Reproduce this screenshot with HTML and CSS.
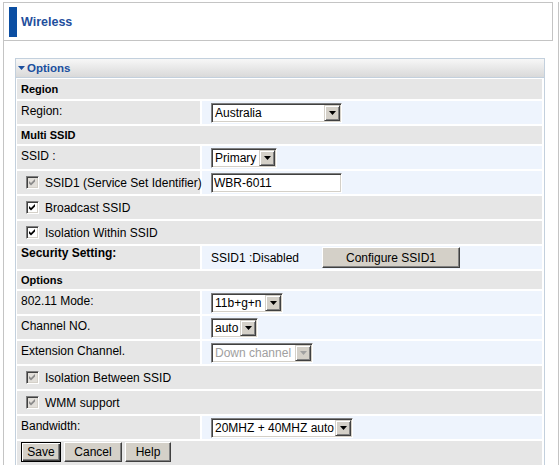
FILE: index.html
```html
<!DOCTYPE html>
<html>
<head>
<meta charset="utf-8">
<title>Wireless</title>
<link rel="stylesheet" href="styles.css">
</head>
<body>
<div class="page">
  <div class="titlebox"><span class="bar"></span><span class="title">Wireless</span></div>
  <div class="content">
    <div class="panel">
      <div class="panel-head"><svg class="tri" width="7" height="4" viewBox="0 0 7 4"><polygon points="0,0 7,0 3.5,4" fill="#1a4f9e"/></svg><span>Options</span></div>
      <div class="panel-body">
        <div class="sec sec-first">Region</div>
        <div class="row">
          <div class="lab">Region:</div>
          <div class="val"><div class="sel w-au"><span class="sel-text">Australia</span><span class="sel-btn"><svg width="7" height="4" viewBox="0 0 7 4"><polygon points="0,0 7,0 3.5,4" fill="#000"/></svg></span></div></div>
        </div>
        <div class="sec">Multi SSID</div>
        <div class="row">
          <div class="lab">SSID :</div>
          <div class="val"><div class="sel w-pr"><span class="sel-text">Primary</span><span class="sel-btn"><svg width="7" height="4" viewBox="0 0 7 4"><polygon points="0,0 7,0 3.5,4" fill="#000"/></svg></span></div></div>
        </div>
        <div class="row">
          <div class="lab lab-chk"><span class="cb cb-dis"><svg width="7" height="7" viewBox="0 0 7 7"><polygon points="0,2 2,4 6,0 6,2.6 2,6.6 0,4.6" fill="#8a8a8a"/></svg></span>SSID1 (Service Set Identifier)</div>
          <div class="val val-in"><input class="txt" type="text" value="WBR-6011"></div>
        </div>
        <div class="full"><span class="cb"><svg width="7" height="7" viewBox="0 0 7 7"><polygon points="0,2 2,4 6,0 6,2.6 2,6.6 0,4.6" fill="#000"/></svg></span>Broadcast SSID</div>
        <div class="full"><span class="cb"><svg width="7" height="7" viewBox="0 0 7 7"><polygon points="0,2 2,4 6,0 6,2.6 2,6.6 0,4.6" fill="#000"/></svg></span>Isolation Within SSID</div>
        <div class="row">
          <div class="lab lab-bold">Security Setting:</div>
          <div class="val val-mid"><span class="sec-state">SSID1 :Disabled</span><button class="btn btn-conf" type="button">Configure SSID1</button></div>
        </div>
        <div class="sec">Options</div>
        <div class="row">
          <div class="lab">802.11 Mode:</div>
          <div class="val"><div class="sel w-md"><span class="sel-text">11b+g+n</span><span class="sel-btn"><svg width="7" height="4" viewBox="0 0 7 4"><polygon points="0,0 7,0 3.5,4" fill="#000"/></svg></span></div></div>
        </div>
        <div class="row">
          <div class="lab">Channel NO.</div>
          <div class="val"><div class="sel w-ch"><span class="sel-text">auto</span><span class="sel-btn"><svg width="7" height="4" viewBox="0 0 7 4"><polygon points="0,0 7,0 3.5,4" fill="#000"/></svg></span></div></div>
        </div>
        <div class="row">
          <div class="lab">Extension Channel.</div>
          <div class="val"><div class="sel sel-dis w-ex"><span class="sel-text">Down channel</span><span class="sel-btn"><svg width="7" height="4" viewBox="0 0 7 4"><polygon points="0,0 7,0 3.5,4" fill="#a0a0a0"/></svg></span></div></div>
        </div>
        <div class="full"><span class="cb cb-dis"><svg width="7" height="7" viewBox="0 0 7 7"><polygon points="0,2 2,4 6,0 6,2.6 2,6.6 0,4.6" fill="#8a8a8a"/></svg></span>Isolation Between SSID</div>
        <div class="full"><span class="cb cb-dis"><svg width="7" height="7" viewBox="0 0 7 7"><polygon points="0,2 2,4 6,0 6,2.6 2,6.6 0,4.6" fill="#8a8a8a"/></svg></span>WMM support</div>
        <div class="row">
          <div class="lab">Bandwidth:</div>
          <div class="val"><div class="sel w-bw"><span class="sel-text">20MHZ + 40MHZ auto</span><span class="sel-btn"><svg width="7" height="4" viewBox="0 0 7 4"><polygon points="0,0 7,0 3.5,4" fill="#000"/></svg></span></div></div>
        </div>
        <div class="full btns">
          <button class="btn btn-default w-save" type="button">Save</button>
          <button class="btn w-cancel" type="button">Cancel</button>
          <button class="btn w-help" type="button">Help</button>
        </div>
      </div>
    </div>
  </div>
</div>
</body>
</html>
```

FILE: styles.css
```css
html, body {
  margin: 0;
  padding: 0;
  overflow: hidden;
  background: #fff;
  font-family: "Liberation Sans", Arial, sans-serif;
  font-size: 12px;
  color: #000;
}

.page {
  margin-left: 3px;
  width: 556px;
  height: 465px;
  box-sizing: border-box;
  border-right: 1px solid #c4c4c4;
}

.titlebox {
  margin-top: 2px;
  width: 550px;
  height: 39px;
  box-sizing: border-box;
  border: 1px solid #c4c4c4;
  display: flex;
  align-items: center;
}

.bar {
  width: 8px;
  height: 30px;
  margin-left: 5px;
  background: #0b4ea2;
}

.title {
  margin-left: 4px;
  font-weight: bold;
  font-size: 12.5px;
  color: #1f4f9d;
}

.content {
  border-left: 1px solid #c4c4c4;
  height: 424px;
  box-sizing: border-box;
  padding: 17px 0 0 11px;
}

.panel {
  width: 530px;
  box-sizing: border-box;
  border: 1px solid #c3d0dd;
  background: #fff;
}

.panel-head {
  height: 18px;
  border-bottom: 1px solid #c3d0dd;
  background: linear-gradient(#f7f7f7, #d9d9d9);
  display: flex;
  align-items: center;
  padding-left: 2px;
  color: #1a4f9e;
  font-weight: bold;
  font-size: 11.5px;
}

.tri {
  margin-right: 2px;
}

.panel-body {
  padding: 1px 2px 0 1px;
  display: flex;
  flex-direction: column;
  gap: 2px;
}

.sec {
  height: 18px;
  background: #e6e6e6;
  font-weight: bold;
  font-size: 11px;
  padding-left: 4px;
  display: flex;
  align-items: center;
}

.sec-first {
  height: 20px;
}

.row {
  display: grid;
  grid-template-columns: 183px 340px;
  column-gap: 2px;
  height: 23px;
}

.lab {
  background: #e6e6e6;
  padding: 3px 0 0 4px;
  line-height: 14px;
  white-space: nowrap;
  overflow: visible;
}

.lab-bold {
  font-weight: bold;
  padding-top: 0;
}

.lab-chk {
  display: flex;
  align-items: center;
  padding: 0 0 0 9px;
}

.val {
  background: #eef4fd;
  padding: 2px 0 0 9px;
  display: flex;
  align-items: flex-start;
}

.val-in {
  padding-top: 2px;
}

.val-mid {
  align-items: center;
  padding-top: 0;
}

.sec-state {
  width: 111px;
}

.full {
  height: 23px;
  background: #e6e6e6;
  display: flex;
  align-items: center;
  padding-left: 9px;
  white-space: nowrap;
}

.cb {
  width: 13px;
  height: 13px;
  box-sizing: border-box;
  border: 1px solid;
  border-color: #808080 #fff #fff #808080;
  box-shadow: inset 1px 1px #404040, inset -1px -1px #d4d0c8;
  background: #fff;
  margin-right: 6px;
  display: flex;
  align-items: center;
  justify-content: center;
  flex: none;
}

.cb-dis {
  background: #e2dfda;
}

.sel {
  display: flex;
  height: 20px;
  box-sizing: border-box;
  border: 1px solid;
  border-color: #808080 #fff #fff #808080;
  box-shadow: inset 1px 1px #404040, inset -1px -1px #d4d0c8;
  background: #fff;
  padding: 1px 1px 1px 3px;
}

.sel-text {
  line-height: 16px;
  white-space: nowrap;
}

.sel-dis .sel-text {
  color: #a0a0a0;
}

.sel-btn {
  width: 16px;
  height: 16px;
  box-sizing: border-box;
  margin-left: auto;
  background: #d4d0c8;
  border: 1px solid;
  border-color: #d4d0c8 #404040 #404040 #d4d0c8;
  box-shadow: inset 1px 1px #fff, inset -1px -1px #808080;
  display: flex;
  align-items: center;
  justify-content: center;
  flex: none;
}

.w-au { width: 131px; }
.w-pr { width: 66px; }
.w-md { width: 72px; }
.w-ch { width: 47px; }
.w-ex { width: 102px; }
.w-bw { width: 142px; }

.txt {
  width: 131px;
  height: 20px;
  box-sizing: border-box;
  margin: 0;
  border: 1px solid;
  border-color: #808080 #fff #fff #808080;
  box-shadow: inset 1px 1px #404040, inset -1px -1px #d4d0c8;
  background: #fff;
  padding: 0 2px;
  font-family: "Liberation Sans", Arial, sans-serif;
  font-size: 12px;
  color: #000;
  outline: none;
}

.btn {
  height: 20px;
  box-sizing: border-box;
  margin: 0;
  padding: 0;
  background: #d4d0c8;
  border: 1px solid;
  border-color: #fff #404040 #404040 #fff;
  box-shadow: inset -1px -1px #808080;
  font-family: "Liberation Sans", Arial, sans-serif;
  font-size: 12px;
  color: #000;
}

.btn-default {
  border: 1px solid #000;
  box-shadow: inset 1px 1px #fff, inset -1px -1px #404040, inset -2px -2px #808080;
}

.btn-conf {
  width: 138px;
  height: 21px;
}

.btns {
  height: 24px;
  align-items: flex-start;
  padding: 1px 0 0 4px;
  gap: 3px;
}

.w-save { width: 40px; }
.w-cancel { width: 58px; }
.w-help { width: 46px; }
```
